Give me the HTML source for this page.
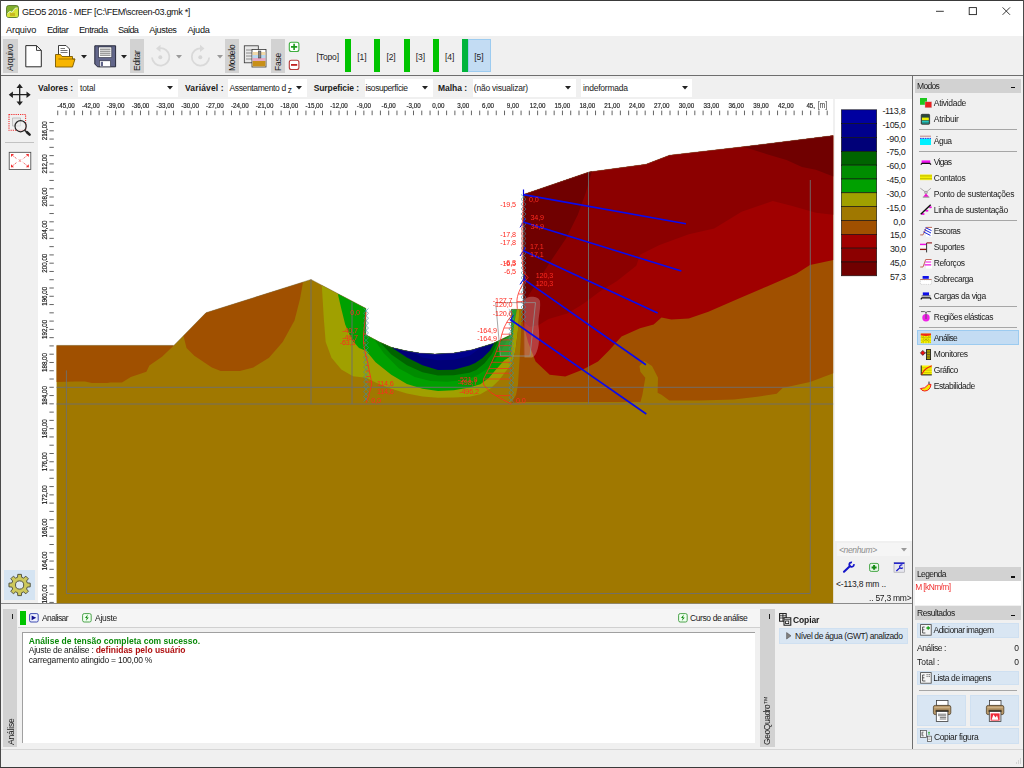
<!DOCTYPE html>
<html><head><meta charset="utf-8"><title>GEO5 2016 - MEF</title>
<style>
html,body{margin:0;padding:0;}
body{width:1024px;height:768px;overflow:hidden;background:#f0f0f0;font-family:"Liberation Sans",sans-serif;font-size:8.5px;color:#1a1a1a;}
#win{position:relative;width:1024px;height:768px;overflow:hidden;background:#f0f0f0;}
.a{position:absolute;}
.t{position:absolute;white-space:pre;line-height:10px;height:10px;letter-spacing:-0.28px;}
.b{font-weight:bold;}
.vt{position:absolute;white-space:pre;transform-origin:0 0;transform:rotate(-90deg);line-height:10px;height:10px;letter-spacing:-0.28px;}
.lab{position:absolute;background:#d2d2d2;}
.hdr{position:absolute;background:#d2d2d2;height:14px;}
.btn{position:absolute;background:#d9e6f3;box-sizing:border-box;border:0.6px solid #cfe0f1;}
.sep{position:absolute;height:1px;background:#a6a6a6;}
svg{position:absolute;overflow:visible;}

</style></head>
<body>
<div id="win">
<div class="a" style="left:0px;top:0px;width:1024px;height:36px;background:#ffffff;"></div>
<svg style="left:6px;top:5px" width="13" height="13" viewBox="0 0 13 13"><rect x="0.5" y="0.5" width="12" height="12" rx="2.2" fill="#7fae2c" stroke="#4d6b1e" stroke-width="0.8"/><path d="M1,9 L4,6.5 L6,7.5 L9,3.5 L12,3 L12,11 Q12,12 11,12 L2,12 Q1,12 1,11 Z" fill="#d8e43a"/><path d="M1.5,8.5 L4,6.3 L6,7.3 L9,3.3 L11.5,2.8" fill="none" stroke="#fff" stroke-width="0.8"/><rect x="4" y="8" width="5" height="3" fill="#c8b820"/></svg>
<div class="t " style="left:22px;top:6.5px;font-size:9.1px;color:#111;letter-spacing:-0.360px">GEO5 2016 - MEF [C:\FEM\screen-03.gmk *]</div>
<svg style="left:930px;top:4px" width="90" height="16" viewBox="930 4 90 16"><path d="M936,11.3 H943.8" stroke="#222" stroke-width="0.9"/><rect x="969.2" y="7.6" width="7.2" height="7.0" fill="none" stroke="#222" stroke-width="0.9"/><path d="M1002.6,7.4 L1010,14.8 M1010,7.4 L1002.6,14.8" stroke="#222" stroke-width="0.9"/></svg>
<div class="t " style="left:6px;top:24.5px;font-size:9.2px;color:#111;letter-spacing:-0.149px">Arquivo</div>
<div class="t " style="left:46.9px;top:24.5px;font-size:9.2px;color:#111;letter-spacing:-0.426px">Editar</div>
<div class="t " style="left:79px;top:24.5px;font-size:9.2px;color:#111;letter-spacing:-0.520px">Entrada</div>
<div class="t " style="left:118.1px;top:24.5px;font-size:9.2px;color:#111;letter-spacing:-0.785px">Saída</div>
<div class="t " style="left:149.2px;top:24.5px;font-size:9.2px;color:#111;letter-spacing:-0.395px">Ajustes</div>
<div class="t " style="left:187.4px;top:24.5px;font-size:9.2px;color:#111;letter-spacing:-0.257px">Ajuda</div>
<div class="a" style="left:0px;top:36px;width:1024px;height:39px;background:#f0f0f0;"></div>
<div class="a" style="left:0px;top:75px;width:1024px;height:1px;background:#6e6e6e;"></div>
<div class="lab" style="left:3px;top:39px;width:14.5px;height:33.5px"></div>
<div class="vt" style="left:5.2px;top:70.5px;font-size:8.5px;letter-spacing:-0.25px;">Arquivo</div>
<div class="lab" style="left:130px;top:39px;width:13.8px;height:33.5px"></div>
<div class="vt" style="left:131.9px;top:70.5px;font-size:8.5px;letter-spacing:-0.25px;">Editar</div>
<div class="lab" style="left:225px;top:39px;width:13.8px;height:33.5px"></div>
<div class="vt" style="left:226.9px;top:71.0px;font-size:8.5px;letter-spacing:-0.25px;">Modelo</div>
<div class="lab" style="left:270.8px;top:39px;width:14.2px;height:33.5px"></div>
<div class="vt" style="left:272.9px;top:71.0px;font-size:8.5px;letter-spacing:-0.25px;">Fase</div>
<svg style="left:24px;top:44px" width="20" height="25" viewBox="24 44 20 25"><path d="M25.8,45.6 H36.5 L41.3,50.4 V66.8 H25.8 Z" fill="#fff" stroke="#2a2a2a" stroke-width="1"/><path d="M36.5,45.6 V50.4 H41.3" fill="none" stroke="#2a2a2a" stroke-width="0.9"/></svg>
<svg style="left:54px;top:44px" width="23" height="25" viewBox="54 44 23 25"><path d="M58.5,45.5 H66 L69.5,49 V58 H58.5 Z" fill="#fff" stroke="#2a2a2a" stroke-width="0.9"/><path d="M60.5,48.5 H65 M60.5,50.5 H67.5 M60.5,52.5 H67.5" stroke="#555" stroke-width="0.8"/><path d="M55.5,54.5 H60.5 L62,56.5 H72.5 V59 H75 L72.5,67 H55.5 Z" fill="#f7b500" stroke="#7a5a00" stroke-width="0.9"/><path d="M58.5,59 H75" stroke="#7a5a00" stroke-width="0.7"/></svg>
<svg style="left:81.3px;top:54.8px" width="6" height="3.5" viewBox="0 0 6 3.5"><path d="M0,0 L6,0 L3,3.5 Z" fill="#222"/></svg>
<svg style="left:93px;top:44px" width="25" height="25" viewBox="93 44 25 25"><path d="M94.8,45.8 H115.6 V66.8 H97.5 L94.8,64 Z" fill="#62668a" stroke="#26283a" stroke-width="1"/><rect x="98.6" y="47" width="13.2" height="10.5" fill="#fff" stroke="#26283a" stroke-width="0.6"/><path d="M100,49.2 H110.5 M100,51.2 H110.5 M100,53.2 H110.5 M100,55.2 H110.5" stroke="#333" stroke-width="0.7"/><rect x="99.5" y="60.8" width="11" height="6" fill="#fff" stroke="#26283a" stroke-width="0.6"/><rect x="100.8" y="61.8" width="2.2" height="4.2" fill="#62668a"/></svg>
<svg style="left:121.3px;top:54.8px" width="6" height="3.5" viewBox="0 0 6 3.5"><path d="M0,0 L6,0 L3,3.5 Z" fill="#222"/></svg>
<svg style="left:148px;top:44px" width="80" height="26" viewBox="148 44 80 26"><g fill="none" stroke="#d9d9d9" stroke-width="1.8"><path d="M159.5,48.3 A8.7,8.7 0 1 1 152,57.5"/><path d="M201,48.3 A8.7,8.7 0 1 0 209.2,57.5"/></g><path d="M160.5,44.8 L156,48.4 L160.5,52 Z" fill="#d9d9d9"/><path d="M200,44.8 L204.5,48.4 L200,52 Z" fill="#d9d9d9"/><circle cx="160.3" cy="57.3" r="2" fill="#d6d6d6"/><circle cx="200.3" cy="57.3" r="2" fill="#d6d6d6"/></svg>
<svg style="left:176.3px;top:54.8px" width="6" height="3.5" viewBox="0 0 6 3.5"><path d="M0,0 L6,0 L3,3.5 Z" fill="#9a9a9a"/></svg>
<svg style="left:216.8px;top:54.8px" width="6" height="3.5" viewBox="0 0 6 3.5"><path d="M0,0 L6,0 L3,3.5 Z" fill="#9a9a9a"/></svg>
<svg style="left:243px;top:44px" width="25" height="25" viewBox="243 44 25 25"><rect x="244.3" y="45.8" width="14" height="17" fill="#e8e8e8" stroke="#333" stroke-width="0.8"/><path d="M246,50 H256 M246,53 H256 M246,56 H256 M246,59 H256" stroke="#777" stroke-width="0.8"/><rect x="252" y="49.5" width="14" height="17.5" fill="#fff" stroke="#333" stroke-width="0.8"/><rect x="252.6" y="52" width="12.8" height="3" fill="#f0d8a8"/><rect x="252.6" y="55" width="12.8" height="3" fill="#b8d8f0"/><rect x="252.6" y="58" width="12.8" height="3" fill="#e8a8c0"/><rect x="252.6" y="61" width="12.8" height="5.4" fill="#c89018"/><rect x="258.5" y="51" width="2.4" height="7" fill="#888" stroke="#333" stroke-width="0.5"/></svg>
<svg style="left:288px;top:41px" width="13" height="31" viewBox="288 41 13 31"><rect x="289.3" y="42.3" width="9.6" height="9.2" rx="2" fill="#fff" stroke="#3fae3f" stroke-width="1.1"/><path d="M291,46.9 H297.2 M294.1,43.8 V50" stroke="#1c9a1c" stroke-width="1.6"/><rect x="289.3" y="60.3" width="9.6" height="9.2" rx="2" fill="#fff" stroke="#b43a3a" stroke-width="1.1"/><path d="M291,64.9 H297.2" stroke="#c02020" stroke-width="1.8"/></svg>
<div class="t " style="left:316.6px;top:52.0px;font-size:8.5px;color:#222;letter-spacing:-0.151px">[Topo]</div>
<div class="a" style="left:345px;top:39.3px;width:6.1px;height:33px;background:#00c400;"></div>
<div class="t " style="left:357.2px;top:52.0px;font-size:8.5px;color:#222;letter-spacing:-0.075px">[1]</div>
<div class="a" style="left:374.2px;top:39.3px;width:6.1px;height:33px;background:#00c400;"></div>
<div class="t " style="left:386.4px;top:52.0px;font-size:8.5px;color:#222;letter-spacing:-0.075px">[2]</div>
<div class="a" style="left:403.5px;top:39.3px;width:6.1px;height:33px;background:#00c400;"></div>
<div class="t " style="left:415.7px;top:52.0px;font-size:8.5px;color:#222;letter-spacing:-0.075px">[3]</div>
<div class="a" style="left:432.8px;top:39.3px;width:6.1px;height:33px;background:#00c400;"></div>
<div class="t " style="left:445.0px;top:52.0px;font-size:8.5px;color:#222;letter-spacing:-0.075px">[4]</div>
<div class="a" style="left:468px;top:39px;width:22.6px;height:33.4px;background:#c3dcf3;border:0.6px solid #9ccbf0;box-sizing:border-box"></div>
<div class="a" style="left:462px;top:39.3px;width:6.1px;height:33px;background:#00b43c;"></div>
<div class="t " style="left:474.2px;top:52.0px;font-size:8.5px;color:#222;letter-spacing:-0.075px">[5]</div>
<div class="t b" style="left:38px;top:83.0px;font-size:8.5px;letter-spacing:-0.054px">Valores :</div>
<div class="a" style="left:78px;top:79px;width:99.5px;height:18px;background:#ffffff;"></div>
<div class="t " style="left:80px;top:83.0px;font-size:8.5px;;letter-spacing:-0.191px">total</div>
<svg style="left:167.2px;top:85.7px" width="6" height="3.5" viewBox="0 0 6 3.5"><path d="M0,0 L6,0 L3,3.5 Z" fill="#222"/></svg>
<div class="t b" style="left:185px;top:83.0px;font-size:8.5px;letter-spacing:0.141px">Variável :</div>
<div class="a" style="left:228px;top:79px;width:78.6px;height:18px;background:#ffffff;"></div>
<div class="t " style="left:229.5px;top:83.0px;font-size:8.5px;;letter-spacing:-0.369px">Assentamento d <span style="position:relative;top:1.6px">z</span></div>
<svg style="left:295.5px;top:85.7px" width="6" height="3.5" viewBox="0 0 6 3.5"><path d="M0,0 L6,0 L3,3.5 Z" fill="#222"/></svg>
<div class="t b" style="left:313.7px;top:83.0px;font-size:8.5px;letter-spacing:-0.090px">Surpeficie :</div>
<div class="a" style="left:364.5px;top:79px;width:68.5px;height:18px;background:#ffffff;"></div>
<div class="t " style="left:365.6px;top:83.0px;font-size:8.5px;;letter-spacing:-0.443px">isosuperfície</div>
<svg style="left:422.3px;top:85.7px" width="6" height="3.5" viewBox="0 0 6 3.5"><path d="M0,0 L6,0 L3,3.5 Z" fill="#222"/></svg>
<div class="t b" style="left:438px;top:83.0px;font-size:8.5px;letter-spacing:-0.046px">Malha :</div>
<div class="a" style="left:472.5px;top:79px;width:103.5px;height:18px;background:#ffffff;"></div>
<div class="t " style="left:473.8px;top:83.0px;font-size:8.5px;;letter-spacing:-0.222px">(não visualizar)</div>
<svg style="left:565px;top:85.7px" width="6" height="3.5" viewBox="0 0 6 3.5"><path d="M0,0 L6,0 L3,3.5 Z" fill="#222"/></svg>
<div class="a" style="left:581px;top:79px;width:111px;height:18px;background:#ffffff;"></div>
<div class="t " style="left:583px;top:83.0px;font-size:8.5px;;letter-spacing:-0.225px">indeformada</div>
<svg style="left:681.5px;top:85.7px" width="6" height="3.5" viewBox="0 0 6 3.5"><path d="M0,0 L6,0 L3,3.5 Z" fill="#222"/></svg>
<svg style="left:7px;top:82px" width="26" height="26" viewBox="7 82 26 26"><path d="M19.7,86 V103.5 M10.8,94.7 H28.6" stroke="#222" stroke-width="1.3"/><path d="M19.7,83.8 L22.9,88 H16.5 Z M19.7,105.6 L22.9,101.4 H16.5 Z M8.7,94.7 L12.9,91.5 V97.9 Z M30.7,94.7 L26.5,91.5 V97.9 Z" fill="#222"/></svg>
<svg style="left:7px;top:112px" width="26" height="26" viewBox="7 112 26 26"><rect x="9" y="114.5" width="16.6" height="15.8" fill="none" stroke="#f03030" stroke-width="1.1" stroke-dasharray="1.2,1"/><path d="M12.5,118 H20.5 V126 H12.5 Z" fill="#e8e8e8" stroke="#b0b0b0" stroke-width="0.7"/><circle cx="20.6" cy="126.2" r="5.6" fill="#f0f0f0" fill-opacity="0.6" stroke="#222" stroke-width="1.2"/><path d="M24.8,130.4 L26.4,131.8" stroke="#222" stroke-width="1.4"/><path d="M27,132.2 L29.6,134.6" stroke="#222" stroke-width="2.6" stroke-linecap="round"/></svg>
<div class="a" style="left:5px;top:142px;width:28.5px;height:1.4px;background:#c2c2c2;"></div>
<svg style="left:8px;top:151px" width="24" height="20" viewBox="8 151 24 20"><rect x="9.2" y="152.3" width="21.6" height="17.2" fill="#fff" stroke="#444" stroke-width="0.8"/><path d="M11.5,154.5 L17,159 M28.3,154.5 L22.8,159 M11.5,166.7 L17,162.2 M28.3,166.7 L22.8,162.2" stroke="#f04040" stroke-width="0.8" stroke-dasharray="1.4,0.8"/><path d="M11,154 h3 l-3,3z M28.8,154 h-3 l3,3z M11,167.2 h3 l-3,-3z M28.8,167.2 h-3 l3,-3z" fill="#f03030"/><path d="M18.8,159.3 l1.2,1.3 l-1.2,1.3 M21,159.3 l-1.2,1.3 l1.2,1.3" stroke="#f04040" stroke-width="0.6" fill="none"/></svg>
<div class="a" style="left:3.8px;top:570px;width:31.2px;height:29.8px;background:#d5e4f2;"></div>
<svg style="left:6px;top:572px" width="28" height="28" viewBox="6 572 28 28"><path d="M27.33,582.94 L30.24,583.17 L30.24,586.83 L27.33,587.06 L26.52,589.01 L28.42,591.23 L25.83,593.82 L23.61,591.92 L21.66,592.73 L21.43,595.64 L17.77,595.64 L17.54,592.73 L15.59,591.92 L13.37,593.82 L10.78,591.23 L12.68,589.01 L11.87,587.06 L8.96,586.83 L8.96,583.17 L11.87,582.94 L12.68,580.99 L10.78,578.77 L13.37,576.18 L15.59,578.08 L17.54,577.27 L17.77,574.36 L21.43,574.36 L21.66,577.27 L23.61,578.08 L25.83,576.18 L28.42,578.77 L26.52,580.99 Z" fill="#cdc85c" stroke="#4a4a3a" stroke-width="0.9" stroke-linejoin="round"/><circle cx="19.6" cy="585" r="4.1" fill="#dfe9f4" stroke="#4a4a3a" stroke-width="0.9"/></svg>
<div class="a" style="left:38px;top:99px;width:795.4px;height:504.5px;background:#ffffff;"></div>
<svg style="left:0;top:0;will-change:transform" width="1024" height="768" viewBox="0 0 1024 768">
<path d="M57.73,110.6V115.2M66.00,110.6V115.2M74.27,110.6V115.2M82.55,110.6V115.2M90.82,110.6V115.2M99.10,110.6V115.2M107.37,110.6V115.2M115.64,110.6V115.2M123.92,110.6V115.2M132.19,110.6V115.2M140.47,110.6V115.2M148.74,110.6V115.2M157.01,110.6V115.2M165.29,110.6V115.2M173.56,110.6V115.2M181.84,110.6V115.2M190.11,110.6V115.2M198.38,110.6V115.2M206.66,110.6V115.2M214.93,110.6V115.2M223.21,110.6V115.2M231.48,110.6V115.2M239.75,110.6V115.2M248.03,110.6V115.2M256.30,110.6V115.2M264.58,110.6V115.2M272.85,110.6V115.2M281.12,110.6V115.2M289.40,110.6V115.2M297.67,110.6V115.2M305.95,110.6V115.2M314.22,110.6V115.2M322.49,110.6V115.2M330.77,110.6V115.2M339.04,110.6V115.2M347.32,110.6V115.2M355.59,110.6V115.2M363.86,110.6V115.2M372.14,110.6V115.2M380.41,110.6V115.2M388.69,110.6V115.2M396.96,110.6V115.2M405.23,110.6V115.2M413.51,110.6V115.2M421.78,110.6V115.2M430.06,110.6V115.2M438.33,110.6V115.2M446.60,110.6V115.2M454.88,110.6V115.2M463.15,110.6V115.2M471.43,110.6V115.2M479.70,110.6V115.2M487.97,110.6V115.2M496.25,110.6V115.2M504.52,110.6V115.2M512.80,110.6V115.2M521.07,110.6V115.2M529.34,110.6V115.2M537.62,110.6V115.2M545.89,110.6V115.2M554.17,110.6V115.2M562.44,110.6V115.2M570.71,110.6V115.2M578.99,110.6V115.2M587.26,110.6V115.2M595.54,110.6V115.2M603.81,110.6V115.2M612.08,110.6V115.2M620.36,110.6V115.2M628.63,110.6V115.2M636.91,110.6V115.2M645.18,110.6V115.2M653.45,110.6V115.2M661.73,110.6V115.2M670.00,110.6V115.2M678.28,110.6V115.2M686.55,110.6V115.2M694.82,110.6V115.2M703.10,110.6V115.2M711.37,110.6V115.2M719.65,110.6V115.2M727.92,110.6V115.2M736.19,110.6V115.2M744.47,110.6V115.2M752.74,110.6V115.2M761.02,110.6V115.2M769.29,110.6V115.2M777.56,110.6V115.2M785.84,110.6V115.2M794.11,110.6V115.2M802.39,110.6V115.2M810.66,110.6V115.2M818.93,110.6V115.2M827.21,110.6V115.2M49.4,602.42H53.8M49.4,594.14H53.8M49.4,585.87H53.8M49.4,577.60H53.8M49.4,569.32H53.8M49.4,561.05H53.8M49.4,552.77H53.8M49.4,544.50H53.8M49.4,536.23H53.8M49.4,527.95H53.8M49.4,519.68H53.8M49.4,511.40H53.8M49.4,503.13H53.8M49.4,494.86H53.8M49.4,486.58H53.8M49.4,478.31H53.8M49.4,470.03H53.8M49.4,461.76H53.8M49.4,453.49H53.8M49.4,445.21H53.8M49.4,436.94H53.8M49.4,428.66H53.8M49.4,420.39H53.8M49.4,412.12H53.8M49.4,403.84H53.8M49.4,395.57H53.8M49.4,387.29H53.8M49.4,379.02H53.8M49.4,370.75H53.8M49.4,362.47H53.8M49.4,354.20H53.8M49.4,345.92H53.8M49.4,337.65H53.8M49.4,329.38H53.8M49.4,321.10H53.8M49.4,312.83H53.8M49.4,304.55H53.8M49.4,296.28H53.8M49.4,288.01H53.8M49.4,279.73H53.8M49.4,271.46H53.8M49.4,263.18H53.8M49.4,254.91H53.8M49.4,246.64H53.8M49.4,238.36H53.8M49.4,230.09H53.8M49.4,221.81H53.8M49.4,213.54H53.8M49.4,205.27H53.8M49.4,196.99H53.8M49.4,188.72H53.8M49.4,180.44H53.8M49.4,172.17H53.8M49.4,163.90H53.8M49.4,155.62H53.8M49.4,147.35H53.8M49.4,139.07H53.8M49.4,130.80H53.8M49.4,122.53H53.8" stroke="#303030" stroke-width="0.75" fill="none"/>
<text transform="translate(66.0,107.7) scale(0.8,1)" font-size="7.8" text-anchor="middle" fill="#1a1a1a" stroke="#1a1a1a" stroke-width="0.18" font-family="Liberation Sans">-45,00</text>
<text transform="translate(90.8,107.7) scale(0.8,1)" font-size="7.8" text-anchor="middle" fill="#1a1a1a" stroke="#1a1a1a" stroke-width="0.18" font-family="Liberation Sans">-42,00</text>
<text transform="translate(115.6,107.7) scale(0.8,1)" font-size="7.8" text-anchor="middle" fill="#1a1a1a" stroke="#1a1a1a" stroke-width="0.18" font-family="Liberation Sans">-39,00</text>
<text transform="translate(140.5,107.7) scale(0.8,1)" font-size="7.8" text-anchor="middle" fill="#1a1a1a" stroke="#1a1a1a" stroke-width="0.18" font-family="Liberation Sans">-36,00</text>
<text transform="translate(165.3,107.7) scale(0.8,1)" font-size="7.8" text-anchor="middle" fill="#1a1a1a" stroke="#1a1a1a" stroke-width="0.18" font-family="Liberation Sans">-33,00</text>
<text transform="translate(190.1,107.7) scale(0.8,1)" font-size="7.8" text-anchor="middle" fill="#1a1a1a" stroke="#1a1a1a" stroke-width="0.18" font-family="Liberation Sans">-30,00</text>
<text transform="translate(214.9,107.7) scale(0.8,1)" font-size="7.8" text-anchor="middle" fill="#1a1a1a" stroke="#1a1a1a" stroke-width="0.18" font-family="Liberation Sans">-27,00</text>
<text transform="translate(239.8,107.7) scale(0.8,1)" font-size="7.8" text-anchor="middle" fill="#1a1a1a" stroke="#1a1a1a" stroke-width="0.18" font-family="Liberation Sans">-24,00</text>
<text transform="translate(264.6,107.7) scale(0.8,1)" font-size="7.8" text-anchor="middle" fill="#1a1a1a" stroke="#1a1a1a" stroke-width="0.18" font-family="Liberation Sans">-21,00</text>
<text transform="translate(289.4,107.7) scale(0.8,1)" font-size="7.8" text-anchor="middle" fill="#1a1a1a" stroke="#1a1a1a" stroke-width="0.18" font-family="Liberation Sans">-18,00</text>
<text transform="translate(314.2,107.7) scale(0.8,1)" font-size="7.8" text-anchor="middle" fill="#1a1a1a" stroke="#1a1a1a" stroke-width="0.18" font-family="Liberation Sans">-15,00</text>
<text transform="translate(339.0,107.7) scale(0.8,1)" font-size="7.8" text-anchor="middle" fill="#1a1a1a" stroke="#1a1a1a" stroke-width="0.18" font-family="Liberation Sans">-12,00</text>
<text transform="translate(363.9,107.7) scale(0.8,1)" font-size="7.8" text-anchor="middle" fill="#1a1a1a" stroke="#1a1a1a" stroke-width="0.18" font-family="Liberation Sans">-9,00</text>
<text transform="translate(388.7,107.7) scale(0.8,1)" font-size="7.8" text-anchor="middle" fill="#1a1a1a" stroke="#1a1a1a" stroke-width="0.18" font-family="Liberation Sans">-6,00</text>
<text transform="translate(413.5,107.7) scale(0.8,1)" font-size="7.8" text-anchor="middle" fill="#1a1a1a" stroke="#1a1a1a" stroke-width="0.18" font-family="Liberation Sans">-3,00</text>
<text transform="translate(438.3,107.7) scale(0.8,1)" font-size="7.8" text-anchor="middle" fill="#1a1a1a" stroke="#1a1a1a" stroke-width="0.18" font-family="Liberation Sans">0,00</text>
<text transform="translate(463.2,107.7) scale(0.8,1)" font-size="7.8" text-anchor="middle" fill="#1a1a1a" stroke="#1a1a1a" stroke-width="0.18" font-family="Liberation Sans">3,00</text>
<text transform="translate(488.0,107.7) scale(0.8,1)" font-size="7.8" text-anchor="middle" fill="#1a1a1a" stroke="#1a1a1a" stroke-width="0.18" font-family="Liberation Sans">6,00</text>
<text transform="translate(512.8,107.7) scale(0.8,1)" font-size="7.8" text-anchor="middle" fill="#1a1a1a" stroke="#1a1a1a" stroke-width="0.18" font-family="Liberation Sans">9,00</text>
<text transform="translate(537.6,107.7) scale(0.8,1)" font-size="7.8" text-anchor="middle" fill="#1a1a1a" stroke="#1a1a1a" stroke-width="0.18" font-family="Liberation Sans">12,00</text>
<text transform="translate(562.4,107.7) scale(0.8,1)" font-size="7.8" text-anchor="middle" fill="#1a1a1a" stroke="#1a1a1a" stroke-width="0.18" font-family="Liberation Sans">15,00</text>
<text transform="translate(587.3,107.7) scale(0.8,1)" font-size="7.8" text-anchor="middle" fill="#1a1a1a" stroke="#1a1a1a" stroke-width="0.18" font-family="Liberation Sans">18,00</text>
<text transform="translate(612.1,107.7) scale(0.8,1)" font-size="7.8" text-anchor="middle" fill="#1a1a1a" stroke="#1a1a1a" stroke-width="0.18" font-family="Liberation Sans">21,00</text>
<text transform="translate(636.9,107.7) scale(0.8,1)" font-size="7.8" text-anchor="middle" fill="#1a1a1a" stroke="#1a1a1a" stroke-width="0.18" font-family="Liberation Sans">24,00</text>
<text transform="translate(661.7,107.7) scale(0.8,1)" font-size="7.8" text-anchor="middle" fill="#1a1a1a" stroke="#1a1a1a" stroke-width="0.18" font-family="Liberation Sans">27,00</text>
<text transform="translate(686.5,107.7) scale(0.8,1)" font-size="7.8" text-anchor="middle" fill="#1a1a1a" stroke="#1a1a1a" stroke-width="0.18" font-family="Liberation Sans">30,00</text>
<text transform="translate(711.4,107.7) scale(0.8,1)" font-size="7.8" text-anchor="middle" fill="#1a1a1a" stroke="#1a1a1a" stroke-width="0.18" font-family="Liberation Sans">33,00</text>
<text transform="translate(736.2,107.7) scale(0.8,1)" font-size="7.8" text-anchor="middle" fill="#1a1a1a" stroke="#1a1a1a" stroke-width="0.18" font-family="Liberation Sans">36,00</text>
<text transform="translate(761.0,107.7) scale(0.8,1)" font-size="7.8" text-anchor="middle" fill="#1a1a1a" stroke="#1a1a1a" stroke-width="0.18" font-family="Liberation Sans">39,00</text>
<text transform="translate(785.8,107.7) scale(0.8,1)" font-size="7.8" text-anchor="middle" fill="#1a1a1a" stroke="#1a1a1a" stroke-width="0.18" font-family="Liberation Sans">42,00</text>
<text transform="translate(810.7,107.7) scale(0.8,1)" font-size="7.8" text-anchor="middle" fill="#1a1a1a" stroke="#1a1a1a" stroke-width="0.18" font-family="Liberation Sans">45,</text>
<text font-size="8.2" text-anchor="middle" transform="translate(822.5,107.9) scale(0.8,1)" fill="#2a2a2a" font-family="Liberation Sans">[m]</text>
<text transform="translate(47,594.1) rotate(-90) scale(0.8,1)" font-size="7.8" text-anchor="middle" fill="#1a1a1a" stroke="#1a1a1a" stroke-width="0.18" font-family="Liberation Sans">160,00</text>
<text transform="translate(47,561.0) rotate(-90) scale(0.8,1)" font-size="7.8" text-anchor="middle" fill="#1a1a1a" stroke="#1a1a1a" stroke-width="0.18" font-family="Liberation Sans">164,00</text>
<text transform="translate(47,528.0) rotate(-90) scale(0.8,1)" font-size="7.8" text-anchor="middle" fill="#1a1a1a" stroke="#1a1a1a" stroke-width="0.18" font-family="Liberation Sans">168,00</text>
<text transform="translate(47,494.9) rotate(-90) scale(0.8,1)" font-size="7.8" text-anchor="middle" fill="#1a1a1a" stroke="#1a1a1a" stroke-width="0.18" font-family="Liberation Sans">172,00</text>
<text transform="translate(47,461.8) rotate(-90) scale(0.8,1)" font-size="7.8" text-anchor="middle" fill="#1a1a1a" stroke="#1a1a1a" stroke-width="0.18" font-family="Liberation Sans">176,00</text>
<text transform="translate(47,428.7) rotate(-90) scale(0.8,1)" font-size="7.8" text-anchor="middle" fill="#1a1a1a" stroke="#1a1a1a" stroke-width="0.18" font-family="Liberation Sans">180,00</text>
<text transform="translate(47,395.6) rotate(-90) scale(0.8,1)" font-size="7.8" text-anchor="middle" fill="#1a1a1a" stroke="#1a1a1a" stroke-width="0.18" font-family="Liberation Sans">184,00</text>
<text transform="translate(47,362.5) rotate(-90) scale(0.8,1)" font-size="7.8" text-anchor="middle" fill="#1a1a1a" stroke="#1a1a1a" stroke-width="0.18" font-family="Liberation Sans">188,00</text>
<text transform="translate(47,329.4) rotate(-90) scale(0.8,1)" font-size="7.8" text-anchor="middle" fill="#1a1a1a" stroke="#1a1a1a" stroke-width="0.18" font-family="Liberation Sans">192,00</text>
<text transform="translate(47,296.3) rotate(-90) scale(0.8,1)" font-size="7.8" text-anchor="middle" fill="#1a1a1a" stroke="#1a1a1a" stroke-width="0.18" font-family="Liberation Sans">196,00</text>
<text transform="translate(47,263.2) rotate(-90) scale(0.8,1)" font-size="7.8" text-anchor="middle" fill="#1a1a1a" stroke="#1a1a1a" stroke-width="0.18" font-family="Liberation Sans">200,00</text>
<text transform="translate(47,230.1) rotate(-90) scale(0.8,1)" font-size="7.8" text-anchor="middle" fill="#1a1a1a" stroke="#1a1a1a" stroke-width="0.18" font-family="Liberation Sans">204,00</text>
<text transform="translate(47,197.0) rotate(-90) scale(0.8,1)" font-size="7.8" text-anchor="middle" fill="#1a1a1a" stroke="#1a1a1a" stroke-width="0.18" font-family="Liberation Sans">208,00</text>
<text transform="translate(47,163.9) rotate(-90) scale(0.8,1)" font-size="7.8" text-anchor="middle" fill="#1a1a1a" stroke="#1a1a1a" stroke-width="0.18" font-family="Liberation Sans">212,00</text>
<text transform="translate(47,130.8) rotate(-90) scale(0.8,1)" font-size="7.8" text-anchor="middle" fill="#1a1a1a" stroke="#1a1a1a" stroke-width="0.18" font-family="Liberation Sans">216,00</text>
</svg>
<div class="a" style="left:833.4px;top:99px;width:2px;height:505px;background:#f0f0f0;"></div>
<div class="a" style="left:835.3px;top:99px;width:76.6px;height:442.3px;background:#ffffff;"></div>
<div class="a" style="left:835.3px;top:541.3px;width:76.6px;height:62.5px;background:#f0f0f0;"></div>
<svg style="left:0;top:0" width="1024" height="768" viewBox="0 0 1024 768">
<rect x="841.4" y="109.80" width="35.3" height="13.83" fill="#0000a0" stroke="#101010" stroke-width="0.6"/>
<rect x="841.4" y="123.63" width="35.3" height="13.83" fill="#00008c" stroke="#101010" stroke-width="0.6"/>
<rect x="841.4" y="137.47" width="35.3" height="13.83" fill="#000078" stroke="#101010" stroke-width="0.6"/>
<rect x="841.4" y="151.30" width="35.3" height="13.83" fill="#006400" stroke="#101010" stroke-width="0.6"/>
<rect x="841.4" y="165.13" width="35.3" height="13.83" fill="#008c00" stroke="#101010" stroke-width="0.6"/>
<rect x="841.4" y="178.97" width="35.3" height="13.83" fill="#00a000" stroke="#101010" stroke-width="0.6"/>
<rect x="841.4" y="192.80" width="35.3" height="13.83" fill="#a0a000" stroke="#101010" stroke-width="0.6"/>
<rect x="841.4" y="206.63" width="35.3" height="13.83" fill="#a07800" stroke="#101010" stroke-width="0.6"/>
<rect x="841.4" y="220.47" width="35.3" height="13.83" fill="#a05000" stroke="#101010" stroke-width="0.6"/>
<rect x="841.4" y="234.30" width="35.3" height="13.83" fill="#a00000" stroke="#101010" stroke-width="0.6"/>
<rect x="841.4" y="248.13" width="35.3" height="13.83" fill="#8c0000" stroke="#101010" stroke-width="0.6"/>
<rect x="841.4" y="261.97" width="35.3" height="13.83" fill="#700000" stroke="#101010" stroke-width="0.6"/>
</svg>
<div class="t" style="right:118.60000000000002px;top:105.9px;font-size:9px;letter-spacing:-0.310px;text-align:right">-113,8</div>
<div class="t" style="right:118.60000000000002px;top:119.7px;font-size:9px;letter-spacing:-0.443px;text-align:right">-105,0</div>
<div class="t" style="right:118.60000000000002px;top:133.6px;font-size:9px;letter-spacing:-0.328px;text-align:right">-90,0</div>
<div class="t" style="right:118.60000000000002px;top:147.4px;font-size:9px;letter-spacing:-0.328px;text-align:right">-75,0</div>
<div class="t" style="right:118.60000000000002px;top:161.2px;font-size:9px;letter-spacing:-0.328px;text-align:right">-60,0</div>
<div class="t" style="right:118.60000000000002px;top:175.1px;font-size:9px;letter-spacing:-0.328px;text-align:right">-45,0</div>
<div class="t" style="right:118.60000000000002px;top:188.9px;font-size:9px;letter-spacing:-0.328px;text-align:right">-30,0</div>
<div class="t" style="right:118.60000000000002px;top:202.7px;font-size:9px;letter-spacing:-0.328px;text-align:right">-15,0</div>
<div class="t" style="right:118.60000000000002px;top:216.6px;font-size:9px;letter-spacing:-0.155px;text-align:right">0,0</div>
<div class="t" style="right:118.60000000000002px;top:230.4px;font-size:9px;letter-spacing:-0.505px;text-align:right">15,0</div>
<div class="t" style="right:118.60000000000002px;top:244.2px;font-size:9px;letter-spacing:-0.505px;text-align:right">30,0</div>
<div class="t" style="right:118.60000000000002px;top:258.1px;font-size:9px;letter-spacing:-0.505px;text-align:right">45,0</div>
<div class="t" style="right:118.60000000000002px;top:271.9px;font-size:9px;letter-spacing:-0.505px;text-align:right">57,3</div>
<div class="a" style="left:836.5px;top:543px;width:73.5px;height:13px;background:#f5f5f5;"></div>
<div class="t " style="left:839px;top:544.7px;font-style:italic;color:#8e8e8e;font-size:8.5px;letter-spacing:-0.363px">&lt;nenhum&gt;</div>
<svg style="left:900.8px;top:548.1px" width="6" height="3.5" viewBox="0 0 6 3.5"><path d="M0,0 L6,0 L3,3.5 Z" fill="#9a9a9a"/></svg>
<svg style="left:840px;top:560px" width="68" height="14" viewBox="840 560 68 14"><path d="M844,571.7 L849.8,566.2" stroke="#1414c8" stroke-width="2.1" stroke-linecap="round"/><path d="M853.87,564.2 A2.3,2.3 0 1 1 852,562.33" stroke="#1414c8" stroke-width="1.8" fill="none"/><rect x="869.6" y="563.4" width="9" height="8" rx="1.6" fill="#e8f5e8" stroke="#48a848" stroke-width="1"/><path d="M871.6,567.4 H876.6 M874.1,565 V569.8" stroke="#148a14" stroke-width="2"/><rect x="894" y="562.6" width="10.4" height="9.6" fill="#e6e6ee" stroke="#a0a0a8" stroke-width="0.6"/><path d="M894,563.2 H904.4" stroke="#1010c8" stroke-width="1.4"/><path d="M896.4,571 L900.2,567.4 M899.8,567.6 a2,2 0 0 1 2.6,-2.6 M899.8,567.6 a2,2 0 0 0 3,0" stroke="#1010c8" stroke-width="1.2" fill="none"/></svg>
<div class="t " style="left:836px;top:579.4px;font-size:8.5px;letter-spacing:-0.170px">&lt;-113,8 mm ..</div>
<div class="t" style="right:112.60000000000002px;top:593px;font-size:8.5px;letter-spacing:-0.251px">.. 57,3 mm&gt;</div>
<div class="a" style="left:912.3px;top:76px;width:1px;height:673px;background:#6e6e6e;"></div>
<div class="hdr" style="left:915px;top:78.5px;width:106px;height:14.2px"></div>
<div class="t " style="left:917px;top:80.6px;font-size:8.5px;letter-spacing:-0.703px">Modos</div>
<div class="a" style="left:1011px;top:87px;width:4.2px;height:1.4px;background:#111;"></div>
<div class="sep" style="left:918.8px;top:129.0px;width:98.4px"></div>
<div class="sep" style="left:918.8px;top:150.5px;width:98.4px"></div>
<div class="sep" style="left:918.8px;top:219.8px;width:98.4px"></div>
<div class="sep" style="left:918.8px;top:305.5px;width:98.4px"></div>
<div class="sep" style="left:918.8px;top:326.7px;width:98.4px"></div>
<svg style="left:920px;top:97.8px" width="12" height="11" viewBox="0 0 12 11"><rect x="0" y="0" width="7" height="6.8" fill="#1ec81e"/><rect x="5" y="3.8" width="6.8" height="6" fill="#e82020" stroke="#c8c8c8" stroke-width="0.4"/></svg>
<div class="t " style="left:933.8px;top:98.2px;font-size:8.5px;letter-spacing:-0.308px">Atividade</div>
<svg style="left:920px;top:113.8px" width="12" height="11" viewBox="0 0 12 11"><rect x="1.2" y="0.3" width="8.4" height="10" rx="0.8" fill="#2a4a3a" stroke="#222" stroke-width="0.7"/><rect x="2" y="3.6" width="6.8" height="2.6" fill="#f0f000"/><rect x="2" y="6.8" width="6.8" height="1" fill="#20e8e8"/><rect x="2" y="8.4" width="6.8" height="1" fill="#20c8c8"/></svg>
<div class="t " style="left:933.8px;top:114.2px;font-size:8.5px;letter-spacing:-0.260px">Atribuir</div>
<svg style="left:920px;top:135.2px" width="12" height="11" viewBox="0 0 12 11"><rect x="0" y="3.6" width="11" height="6.4" fill="#00f0ff"/><path d="M0,1.2 H11" stroke="#c07878" stroke-width="0.9"/><path d="M0,3.4 H11" stroke="#2020e0" stroke-width="0.9" stroke-dasharray="1.6,0.8"/></svg>
<div class="t " style="left:933.8px;top:135.6px;font-size:8.5px;letter-spacing:-0.517px">Água</div>
<svg style="left:920px;top:156.2px" width="12" height="11" viewBox="0 0 12 11"><rect x="1.6" y="4.4" width="8.6" height="2.7" fill="#f010f0"/><path d="M0.8,8.7 L2,7.3 H9.8 L11,8.7" stroke="#111" stroke-width="1.2" fill="none"/></svg>
<div class="t " style="left:933.8px;top:156.6px;font-size:8.5px;letter-spacing:-0.727px">Vigas</div>
<svg style="left:920px;top:172.1px" width="12" height="11" viewBox="0 0 12 11"><path d="M0,3 l1,-1 l1,1 l1,-1 l1,1 l1,-1 l1,1 l1,-1 l1,1 l1,-1 l1,1 l1,-1 l1,1 V7.6 l-1,1 l-1,-1 l-1,1 l-1,-1 l-1,1 l-1,-1 l-1,1 l-1,-1 l-1,1 l-1,-1 l-1,1 l-1,-1 Z" fill="#f4f000"/><path d="M0,3.9 H12 M0,6.7 H12" stroke="#a8a000" stroke-width="0.7"/></svg>
<div class="t " style="left:933.8px;top:172.5px;font-size:8.5px;letter-spacing:-0.303px">Contatos</div>
<svg style="left:920px;top:188.2px" width="12" height="11" viewBox="0 0 12 11"><path d="M0.3,0.2 L6,4.4 L11,0.2" stroke="#777" stroke-width="0.6" fill="none"/><circle cx="6" cy="4.6" r="1.4" fill="#c8c8c8" stroke="#777" stroke-width="0.5"/><path d="M6,5.4 L9,8.8 H3.2 Z" fill="#f010d0"/><path d="M2.8,9.2 H9.4" stroke="#555" stroke-width="0.6"/></svg>
<div class="t " style="left:933.8px;top:188.6px;font-size:8.5px;letter-spacing:-0.294px">Ponto de sustentações</div>
<svg style="left:920px;top:204.29999999999998px" width="12" height="11" viewBox="0 0 12 11"><ellipse cx="3" cy="10" rx="1.7" ry="1" fill="#f010e0"/><ellipse cx="6.8" cy="6.8" rx="1.7" ry="1" fill="#f010e0"/><ellipse cx="10.4" cy="3.2" rx="1.5" ry="1" fill="#f010e0"/><path d="M0.7,10.2 L10.7,0.7" stroke="#111" stroke-width="1.4"/></svg>
<div class="t " style="left:933.8px;top:204.7px;font-size:8.5px;letter-spacing:-0.342px">Linha de sustentação</div>
<svg style="left:920px;top:225.6px" width="12" height="11" viewBox="0 0 12 11"><rect x="6" y="2" width="6" height="8.6" fill="#fff"/><path d="M0.2,8.9 H3 L6.5,1.4 H12" stroke="#b85848" stroke-width="0.9" fill="none"/><path d="M5.5,1.6 L11.5,4.6 M4.4,3.6 L11,7 M3.4,5.8 L10.4,9.4" stroke="#1828e0" stroke-width="1"/></svg>
<div class="t " style="left:933.8px;top:226.0px;font-size:8.5px;letter-spacing:-0.634px">Escoras</div>
<svg style="left:920px;top:241.6px" width="12" height="11" viewBox="0 0 12 11"><path d="M0,2.4 H6.4" stroke="#f010e0" stroke-width="1.4"/><path d="M0,4.9 H6.4" stroke="#fff" stroke-width="1.2"/><path d="M0,7.4 H6.4" stroke="#901010" stroke-width="1.3"/><path d="M6.6,1 V10.4" stroke="#333" stroke-width="1"/><path d="M6.6,0.9 H12" stroke="#901010" stroke-width="1.1"/></svg>
<div class="t " style="left:933.8px;top:242.0px;font-size:8.5px;letter-spacing:-0.431px">Suportes</div>
<svg style="left:920px;top:257.6px" width="12" height="11" viewBox="0 0 12 11"><rect x="6" y="2.2" width="6" height="8.4" fill="#fff"/><path d="M0.2,9 H3 L5.7,1.5 H11.6" stroke="#c05848" stroke-width="0.9" fill="none"/><path d="M5.4,4 H11.2 M4.4,6.9 H11.2" stroke="#f010e0" stroke-width="1.1"/></svg>
<div class="t " style="left:933.8px;top:258.0px;font-size:8.5px;letter-spacing:-0.402px">Reforços</div>
<svg style="left:920px;top:274.0px" width="12" height="11" viewBox="0 0 12 11"><rect x="0.4" y="5.8" width="11" height="4.6" fill="#fff" stroke="#b0b0b0" stroke-width="0.5" stroke-dasharray="1,0.8"/><rect x="2.6" y="2" width="6.2" height="2.8" fill="#1010e8"/><path d="M0.2,5.5 H11.6" stroke="#b07060" stroke-width="0.9"/></svg>
<div class="t " style="left:933.8px;top:274.4px;font-size:8.5px;letter-spacing:-0.460px">Sobrecarga</div>
<svg style="left:920px;top:290.1px" width="12" height="11" viewBox="0 0 12 11"><rect x="2.8" y="2.4" width="6.2" height="3.2" fill="#1010e8"/><rect x="1.6" y="5.8" width="8.8" height="2" fill="#d0d0d0"/><path d="M0.8,9.4 L2,7.8 H10 L11.2,9.4" stroke="#111" stroke-width="1.2" fill="none"/><path d="M1.6,5.8 H10.4" stroke="#333" stroke-width="0.6"/></svg>
<div class="t " style="left:933.8px;top:290.5px;font-size:8.5px;letter-spacing:-0.367px">Cargas da viga</div>
<svg style="left:920px;top:311.40000000000003px" width="12" height="11" viewBox="0 0 12 11"><circle cx="6" cy="6.8" r="3.7" fill="#f020e8"/><path d="M1,0.6 H4.6 Q6,0.8 6,2.4 V8 M10.8,0.6 H7.4 Q6,0.8 6,2.4" stroke="#555" stroke-width="0.9" fill="none"/></svg>
<div class="t " style="left:933.8px;top:311.8px;font-size:8.5px;letter-spacing:-0.432px">Regiões elásticas</div>
<div class="a" style="left:917.2px;top:330.4px;width:101.6px;height:14.6px;background:#c3dcf3;border:0.6px solid #9ccbf0;box-sizing:border-box"></div>
<svg style="left:920px;top:332.8px" width="12" height="11" viewBox="0 0 12 11"><rect x="0.8" y="0.6" width="10.2" height="9.6" fill="#f8f400"/><path d="M0.8,0.4 H11 V2.2 Q6,3.6 0.8,2.2 Z" fill="#f02818"/><path d="M0.8,4.6 H11 M0.8,7.2 H11 M3.4,3 V10.2 M6,3 V10.2 M8.6,3 V10.2 M0.8,3 L11,10 M11,3 L0.8,10" stroke="#605800" stroke-width="0.4" stroke-dasharray="0.8,0.8"/></svg>
<div class="t " style="left:933.8px;top:333.2px;font-size:8.5px;letter-spacing:-0.646px">Análise</div>
<svg style="left:920px;top:348.6px" width="12" height="11" viewBox="0 0 12 11"><rect x="6.4" y="0.6" width="4.2" height="10" fill="#a8a000" stroke="#111" stroke-width="0.8"/><path d="M6.4,3.2 H10.6 M6.4,5.6 H10.6 M6.4,8 H10.6" stroke="#333" stroke-width="0.5"/><path d="M2.8,1.4 L5.2,3.9 L2.8,6.4 L0.4,3.9 Z" fill="#f01010" stroke="#111" stroke-width="0.6"/><path d="M5.2,3.9 H6.4" stroke="#111" stroke-width="0.8"/></svg>
<div class="t " style="left:933.8px;top:349.0px;font-size:8.5px;letter-spacing:-0.390px">Monitores</div>
<svg style="left:920px;top:364.6px" width="12" height="11" viewBox="0 0 12 11"><rect x="1.2" y="0.5" width="10.6" height="9.4" fill="#f8f400"/><path d="M1.2,2.8 H11.8 M1.2,5.2 H11.8 M1.2,7.6 H11.8" stroke="#a8a000" stroke-width="0.5"/><path d="M1.2,0.5 V9.9 H11.8" stroke="#111" stroke-width="1" fill="none"/><path d="M1.6,9.6 Q4,3.6 11.8,0.8" stroke="#f01010" stroke-width="1.1" fill="none"/></svg>
<div class="t " style="left:933.8px;top:365.0px;font-size:8.5px;letter-spacing:-0.499px">Gráfico</div>
<svg style="left:920px;top:380.6px" width="12" height="11" viewBox="0 0 12 11"><path d="M0.4,7.6 Q5,8 8.4,3.4 L11,3.4 Q10.2,9.8 4.6,10 Q1.6,9.8 0.4,7.6 Z" fill="#f8e800" stroke="#f01818" stroke-width="1"/><path d="M9,0.6 V3" stroke="#111" stroke-width="0.9"/></svg>
<div class="t " style="left:933.8px;top:381.0px;font-size:8.5px;letter-spacing:-0.437px">Estabilidade</div>
<div class="hdr" style="left:915px;top:567.2px;width:105.8px;height:13.7px"></div>
<div class="t " style="left:917px;top:569.3px;font-size:8.5px;letter-spacing:-0.615px">Legenda</div>
<div class="a" style="left:1011px;top:576.3px;width:4.2px;height:1.4px;background:#111;"></div>
<div class="a" style="left:915px;top:580.8px;width:105.8px;height:23.8px;background:#ffffff;"></div>
<div class="t " style="left:915.2px;top:581.8px;font-size:8.4px;color:#f03030;letter-spacing:-0.574px">M [kNm/m]</div>
<div class="hdr" style="left:915px;top:606.2px;width:105.8px;height:13.5px"></div>
<div class="t " style="left:917px;top:608.0px;font-size:8.5px;letter-spacing:-0.469px">Resultados</div>
<div class="a" style="left:1011px;top:615px;width:4.2px;height:1.4px;background:#111;"></div>
<div class="btn" style="left:917px;top:622.6px;width:102px;height:15.2px"></div>
<svg style="left:920px;top:624.4px" width="12" height="12" viewBox="0 0 12 12"><rect x="0.6" y="0.6" width="10.6" height="10.6" fill="#f4f4f4" stroke="#444" stroke-width="0.8"/><path d="M2.6,3 V9 H5.4 M2.6,3 H4.6 M2.6,5.8 H4.4" stroke="#333" stroke-width="0.8" fill="none"/><path d="M6.4,4 H10 M8.2,2.2 V5.8" stroke="#18a018" stroke-width="1.3"/></svg>
<div class="t " style="left:933.6px;top:625.4px;font-size:8.5px;letter-spacing:-0.508px">Adicionar imagem</div>
<div class="t " style="left:917px;top:642.5px;font-size:8.5px;letter-spacing:-0.400px">Análise :</div>
<div class="t" style="right:5.399999999999977px;top:642.5px;font-size:8.5px">0</div>
<div class="t " style="left:917px;top:657.0px;font-size:8.5px;letter-spacing:-0.046px">Total :</div>
<div class="t" style="right:5.399999999999977px;top:657px;font-size:8.5px">0</div>
<div class="btn" style="left:917px;top:670.7px;width:102px;height:14.8px"></div>
<svg style="left:920px;top:672.2px" width="12" height="12" viewBox="0 0 12 12"><rect x="0.6" y="0.6" width="10.6" height="10.6" fill="#f4f4f4" stroke="#444" stroke-width="0.8"/><path d="M2.6,3 V9 H5.4 M2.6,3 H4.6 M2.6,5.8 H4.4" stroke="#333" stroke-width="0.8" fill="none"/><path d="M6.6,2.6 H7.6 M8.6,2.6 H9.8 M6.6,4.4 H7.6 M8.6,4.4 H9.8" stroke="#444" stroke-width="0.9"/></svg>
<div class="t " style="left:933.2px;top:673.2px;font-size:8.5px;letter-spacing:-0.404px">Lista de imagens</div>
<div class="sep" style="left:918.7px;top:690px;width:98.4px"></div>
<div class="btn" style="left:917px;top:695.3px;width:48.9px;height:30.3px"></div>
<div class="btn" style="left:970.4px;top:695.3px;width:48.6px;height:30.3px"></div>
<svg style="left:930px;top:698px" width="24" height="26" viewBox="930 698 24 26"><rect x="936.6" y="700.6" width="11.4" height="5.2" fill="#fff" stroke="#3a3a3a" stroke-width="0.8"/><rect x="933.4" y="705.4" width="17.4" height="9.2" rx="1.8" fill="#b89868" stroke="#54442c" stroke-width="0.8"/><path d="M934.4,707.4 H949.8" stroke="#d0b890" stroke-width="0.8"/><rect x="935.6" y="709.8" width="13" height="2.2" fill="#4a3c28"/><rect x="936.3" y="711.6" width="11.6" height="10" fill="#fff" stroke="#3a3a3a" stroke-width="0.8"/><path d="M938,714.2 H946.2 M938,715.8 H946.2 M938,717.4 H946.2 M938,719 H946.2" stroke="#555" stroke-width="0.8"/><rect x="937.8" y="716.4" width="2" height="3.4" fill="#fff"/></svg>
<svg style="left:983.3px;top:698px" width="24" height="26" viewBox="930 698 24 26"><rect x="936.6" y="700.6" width="11.4" height="5.2" fill="#fff" stroke="#3a3a3a" stroke-width="0.8"/><rect x="933.4" y="705.4" width="17.4" height="9.2" rx="1.8" fill="#b89868" stroke="#54442c" stroke-width="0.8"/><path d="M934.4,707.4 H949.8" stroke="#d0b890" stroke-width="0.8"/><rect x="935.6" y="709.8" width="13" height="2.2" fill="#4a3c28"/><rect x="936.3" y="711.6" width="11.6" height="10" fill="#fff" stroke="#3a3a3a" stroke-width="0.8"/><rect x="937.6" y="713.4" width="9" height="7.2" fill="#f02838"/><path d="M938.6,719.8 L940.4,714.6 L942.6,717.6 L944,715.2 L945.4,719.8 Z" fill="#fff"/></svg>
<div class="btn" style="left:917px;top:728.2px;width:102px;height:15.5px"></div>
<svg style="left:920px;top:730px" width="12" height="12" viewBox="0 0 12 12"><rect x="0.5" y="0.5" width="6" height="7" fill="#f4f4f4" stroke="#444" stroke-width="0.7"/><path d="M2,2.2 V5.8 H3.8 M2,2.2 H3.6 M2,4 H3.2" stroke="#333" stroke-width="0.6" fill="none"/><rect x="7.4" y="6.2" width="4" height="5.2" fill="#fff" stroke="#444" stroke-width="0.7"/><path d="M8.2,8 H10.6 M8.2,9.6 H10.6" stroke="#666" stroke-width="0.5"/><path d="M8,2.4 h2 M8,4 h2" stroke="#18a018" stroke-width="0.8"/></svg>
<div class="t " style="left:933.9px;top:731.8px;font-size:8.5px;letter-spacing:-0.322px">Copiar figura</div>
<div class="a" style="left:0px;top:603.3px;width:912.3px;height:1px;background:#8a8a8a;"></div>
<div class="a" style="left:2.6px;top:608.7px;width:14.9px;height:138.5px;background:#d2d2d2;"></div>
<div class="a" style="left:11.7px;top:614.4px;width:1.1px;height:4.6px;background:#222;"></div>
<div class="vt" style="left:5.6px;top:745.4px;font-size:8.5px;letter-spacing:-0.2px;">Análise</div>
<div class="a" style="left:17.5px;top:608.7px;width:742px;height:18.2px;background:#f5f5f5;"></div>
<div class="a" style="left:17.5px;top:626.9px;width:742px;height:0.9px;background:#d0d0d0;"></div>
<div class="a" style="left:19.8px;top:610.6px;width:5.8px;height:14.7px;background:#00c400;"></div>
<svg style="left:28.6px;top:612.6px" width="10" height="10" viewBox="0 0 10 10"><rect x="0.6" y="0.6" width="8.6" height="8.4" rx="1.4" fill="#eef0ff" stroke="#2a3aa8" stroke-width="0.9"/><path d="M2.6,2.4 L7.2,4.8 L2.6,7.2 Z" fill="#101090"/></svg>
<div class="t " style="left:42px;top:613.2px;font-size:8.5px;letter-spacing:-0.601px">Analisar</div>
<svg style="left:82.4px;top:612.6px" width="10" height="10" viewBox="0 0 10 10"><rect x="0.6" y="0.6" width="8.6" height="8.4" rx="1.6" fill="#f0fff0" stroke="#3a9a3a" stroke-width="0.9"/><path d="M5.8,1.6 L3,5 H4.8 L3.8,8 L6.8,4.4 H5 Z" fill="#108a10"/></svg>
<div class="t " style="left:95px;top:613.2px;font-size:8.5px;letter-spacing:-0.265px">Ajuste</div>
<svg style="left:677.8px;top:612.8px" width="10" height="10" viewBox="0 0 10 10"><rect x="0.6" y="0.6" width="8.6" height="8.4" rx="1.6" fill="#f0fff0" stroke="#3a9a3a" stroke-width="0.9"/><path d="M5.8,1.6 L3,5 H4.8 L3.8,8 L6.8,4.4 H5 Z" fill="#108a10"/></svg>
<div class="t " style="left:690px;top:613.2px;font-size:8.5px;letter-spacing:-0.399px">Curso de análise</div>
<div class="a" style="left:22.4px;top:632px;width:732.8px;height:110.8px;background:#ffffff;border-left:1px solid #a0a0a0;border-top:1px solid #a0a0a0;box-sizing:border-box"></div>
<div class="t b" style="left:28.8px;top:636.0px;font-size:8.5px;color:#0a8a0a;letter-spacing:0.020px">Análise de tensão completa com sucesso.</div>
<div class="t " style="left:28.8px;top:645.4px;font-size:8.5px;letter-spacing:-0.248px">Ajuste de análise :</div>
<div class="t b" style="left:95.7px;top:645.4px;font-size:8.5px;color:#b01010;letter-spacing:-0.019px">definidas pelo usuário</div>
<div class="t " style="left:28.8px;top:654.8px;font-size:8.5px;letter-spacing:-0.212px">carregamento atingido = 100,00 %</div>
<div class="a" style="left:759.6px;top:608.7px;width:15px;height:138.5px;background:#d2d2d2;"></div>
<div class="a" style="left:769px;top:614.4px;width:1.1px;height:4.6px;background:#222;"></div>
<div class="vt" style="left:762.2px;top:745.4px;font-size:8.5px;letter-spacing:-0.45px;">GeoQuadro™</div>
<svg style="left:779px;top:613.4px" width="13" height="13" viewBox="0 0 13 13"><rect x="0.6" y="0.6" width="6.6" height="7.6" fill="#fff" stroke="#111" stroke-width="1"/><path d="M1,2.8 H7 M1,5 H7 M3.9,0.8 V8" stroke="#111" stroke-width="0.8"/><rect x="5" y="4.8" width="6.8" height="7.4" fill="#fff" stroke="#111" stroke-width="1"/><rect x="6.6" y="8" width="3.2" height="2.6" fill="#fff" stroke="#111" stroke-width="0.8"/><path d="M5.4,6.6 H11.4" stroke="#111" stroke-width="0.7"/></svg>
<div class="t b" style="left:793px;top:615.0px;font-size:8.5px;letter-spacing:-0.124px">Copiar</div>
<div class="btn" style="left:778.6px;top:628px;width:129.2px;height:15.6px"></div>
<svg style="left:786px;top:632px" width="6" height="8" viewBox="0 0 6 8"><path d="M0.6,0.6 L5,3.8 L0.6,7 Z" fill="#808080" stroke="#555" stroke-width="0.6"/></svg>
<div class="t " style="left:795px;top:630.8px;font-size:8.5px;letter-spacing:-0.398px">Nível de água (GWT) analizado</div>
<div class="a" style="left:0px;top:748.8px;width:1024px;height:0.9px;background:#d6d6d6;"></div>
<svg style="left:1012px;top:757px" width="10" height="10" viewBox="0 0 10 10"><path d="M8,2 h1 M6,4 h1 M8,4 h1 M4,6 h1 M6,6 h1 M8,6 h1" stroke="#b8b8b8" stroke-width="1"/></svg>
<div class="a" style="left:0px;top:0px;width:1024px;height:1px;background:#3a3a3a;"></div>
<div class="a" style="left:0px;top:0px;width:1.2px;height:768px;background:#4a4a4a;"></div>
<div class="a" style="left:1022.8px;top:0px;width:1.2px;height:768px;background:#4a4a4a;"></div>
<div class="a" style="left:0px;top:766.6px;width:1024px;height:1.4px;background:#3a3a3a;"></div>
<svg class="a" style="left:0;top:0;will-change:transform" width="1024" height="768" viewBox="0 0 1024 768">
<defs><clipPath id="cv"><rect x="38" y="99" width="795.4" height="504.5"/></clipPath></defs>
<g clip-path="url(#cv)">
<polygon points="56.6,603.5 56.6,345.4 173.8,345.4 206.0,312.7 240.0,302.0 311.0,279.5 366.0,308.4 366.0,334.8 379.0,341.8 391.3,347.3 405.0,350.6 419.4,353.1 435.0,354.0 453.8,353.1 472.5,349.7 492.8,343.4 511.3,334.6 511.3,309.3 523.5,309.3 523.5,194.4 589.0,172.0 646.0,164.3 669.5,155.2 745.0,146.5 833.4,135.5 833.4,603.5" fill="#a07800"/>
<polygon points="56.6,345.4 173.8,345.4 162.0,356.7 149.4,365.5 146.4,371.7 130.8,377.0 122.0,382.5 110.0,382.5 107.4,383.0 91.8,383.0 85.0,381.5 75.0,381.5 56.6,382.0" fill="#a05000"/>
<polygon points="183.5,336.0 206.0,312.7 240.0,302.0 303.0,282.2 300.0,299.0 294.5,320.5 282.7,342.0 269.0,357.7 253.4,367.4 239.8,371.0 220.7,371.0 211.9,367.4 194.3,355.7 186.5,348.0" fill="#a05000"/>
<polygon points="321.8,285.3 366.0,308.4 366.0,334.8 379.0,341.8 391.3,347.3 405.0,350.6 419.4,353.1 435.0,354.0 453.8,353.1 472.5,349.7 492.8,343.4 511.3,334.6 511.3,364.4 505.4,371.7 499.2,380.0 490.8,388.3 480.4,394.2 469.4,396.8 453.8,397.5 438.0,397.8 422.5,396.6 406.9,393.4 391.3,388.8 375.6,382.5 366.3,377.8 353.0,376.2 341.3,369.4 331.5,357.7 325.7,342.0 323.8,318.6" fill="#a0a000"/>
<polygon points="337.8,293.7 366.0,308.4 366.0,334.8 379.0,341.8 391.3,347.3 405.0,350.6 419.4,353.1 435.0,354.0 453.8,353.1 472.5,349.7 492.8,343.4 511.3,334.6 511.3,356.0 504.4,360.2 496.0,369.6 488.8,378.0 480.4,384.2 469.4,387.6 453.8,390.3 438.0,391.0 422.5,388.8 406.9,384.0 391.3,374.7 375.6,362.2 366.3,351.0 359.0,348.0 352.0,340.0 345.2,324.5 341.3,308.8" fill="#00a000"/>
<polygon points="374.0,339.1 379.0,341.8 391.3,347.3 405.0,350.6 419.4,353.1 435.0,354.0 453.8,353.1 472.5,349.7 492.8,343.4 509.6,335.4 501.3,350.8 495.0,360.2 487.7,368.5 478.5,374.5 470.0,378.5 463.1,380.0 447.5,381.7 430.3,381.0 414.7,377.0 399.0,368.4 383.4,352.8" fill="#008c00"/>
<polygon points="380.3,342.4 391.3,347.3 405.0,350.6 419.4,353.1 435.0,354.0 453.8,353.1 472.5,349.7 492.8,343.4 498.0,340.9 491.9,354.0 484.6,363.3 476.3,370.0 469.4,372.8 453.8,375.2 438.0,375.5 422.5,372.3 406.9,365.3 391.3,354.4" fill="#006400"/>
<polygon points="391.3,347.3 405.0,350.6 419.4,353.1 435.0,354.0 453.8,353.1 472.5,349.7 492.8,343.4 494.5,342.6 489.8,350.8 482.5,358.0 475.2,363.0 469.4,365.6 453.8,369.7 438.0,370.0 422.5,365.3 406.9,357.5" fill="#000078"/>
<polygon points="411.5,351.7 419.4,353.1 435.0,354.0 453.8,353.1 472.5,349.7 481.9,346.8 469.4,356.0 453.8,359.8 438.0,360.3 422.5,357.5" fill="#00008c"/>
<polygon points="511.3,309.3 523.5,309.3 523.5,194.4 589.0,172.0 646.0,164.3 669.5,155.2 745.0,146.5 833.4,135.5 833.4,373.3 810.0,382.0 782.6,388.0 776.7,393.8 757.2,396.7 733.8,399.6 698.6,400.6 669.3,400.6 661.5,394.8 657.6,392.8 658.0,377.7 652.0,366.0 644.3,361.0 639.4,366.0 640.4,371.8 645.3,377.7 642.3,395.2 640.4,402.0 519.3,402.0 511.3,403.0" fill="#a05000"/>
<polygon points="523.5,309.3 523.5,194.4 589.0,172.0 646.0,164.3 669.5,155.2 745.0,146.5 833.4,135.5 833.4,260.0 810.0,264.9 796.3,273.7 767.0,286.4 737.7,299.0 708.4,311.8 688.8,318.6 671.3,319.6 661.5,317.6 653.7,324.5 640.0,328.2 621.5,336.5 609.0,350.6 598.0,361.5 582.5,369.8 565.3,376.6 549.7,374.8 535.6,361.5 528.0,342.0 523.5,325.0" fill="#a00000"/>
<polygon points="523.5,303.0 523.5,194.4 589.0,172.0 646.0,164.3 669.5,155.2 745.0,146.5 833.4,135.5 833.4,214.7 815.8,212.8 792.3,206.0 772.8,201.0 741.6,211.8 714.2,228.4 688.8,234.3 659.5,245.0 640.0,254.8 636.3,265.7 616.7,281.3 599.4,291.7 583.8,303.4 568.0,313.2 548.6,319.0 538.8,325.0 530.0,327.0 523.5,322.0" fill="#8c0000"/>
<polygon points="523.5,194.4 589.0,172.0 592.0,171.0 585.5,193.4 577.7,215.0 566.0,238.4 550.3,261.8 536.6,283.3 523.5,302.8" fill="#700000"/>
<polygon points="743.5,146.7 833.4,135.5 833.4,176.6 815.8,169.8 802.0,166.9 786.5,160.0 767.0,154.2" fill="#700000"/>
<polygon points="511.3,309.3 517.0,309.3 514.0,325.0 512.3,340.0 511.3,350.0" fill="#20a028"/>
<polygon points="517.0,309.3 519.5,309.3 518.0,330.0 515.5,350.0 513.0,360.0 511.3,366.0 511.3,350.0 512.3,340.0 514.0,325.0" fill="#a0a000"/>
<polygon points="519.5,309.3 521.5,309.3 521.0,335.0 519.5,360.0 518.0,385.0 516.0,395.0 511.3,403.0 511.3,366.0 513.0,360.0 515.5,350.0 518.0,330.0" fill="#a07800"/>
<path d="M524,300 C526,296 538,295 540,301 C541,312 537,318 539,330 C540,345 537,356 532,357.5 L524.5,357.5 Z" fill="#ffffff" fill-opacity="0.24"/>
<polygon points="523.5,329.0 535.0,329.0 530.0,356.0 523.5,356.0" fill="#c04040" fill-opacity="0.25"/>
<polygon points="495.7,302.6 535.5,302.6 530.0,356.0 500.4,356.0" fill="none" stroke="#909090" stroke-width="0.8"/>
<polygon points="500.0,342.0 511.3,334.6 511.3,356.0 500.4,356.0" fill="#a0a0a0" fill-opacity="0.3"/>
<line x1="56.6" y1="387.3" x2="833.4" y2="387.3" stroke="#6e6e6e" stroke-width="0.9"/>
<line x1="56.6" y1="404" x2="833.4" y2="404" stroke="#6e6e6e" stroke-width="0.9"/>
<line x1="66.4" y1="370.4" x2="66.4" y2="593.5" stroke="#6e6e6e" stroke-width="0.9"/>
<line x1="66.4" y1="593.5" x2="810.3" y2="593.5" stroke="#6e6e6e" stroke-width="0.9"/>
<line x1="810.3" y1="180" x2="810.3" y2="593.5" stroke="#6e6e6e" stroke-width="0.9"/>
<line x1="311" y1="279.5" x2="311" y2="404" stroke="#6e6e6e" stroke-width="0.9"/>
<line x1="352" y1="302" x2="352" y2="404" stroke="#6e6e6e" stroke-width="0.9"/>
<line x1="588.5" y1="172" x2="588.5" y2="404" stroke="#6e6e6e" stroke-width="0.9"/>
<polyline points="56.6,345.4 173.8,345.4 206.0,312.7 240.0,302.0 311.0,279.5 366.0,308.4 366.0,334.8 379.0,341.8 391.3,347.3 405.0,350.6 419.4,353.1 435.0,354.0 453.8,353.1 472.5,349.7 492.8,343.4 511.3,334.6 511.3,309.3 523.5,309.3 523.5,194.4 589.0,172.0 646.0,164.3 669.5,155.2 745.0,146.5 833.4,135.5" fill="none" stroke="#7a6a50" stroke-width="0.6" stroke-opacity="0.7"/>
<polyline points="368.5,308.4 363.5,313.3 368.5,318.2 363.5,323.1 368.5,328.0 363.5,332.9 368.5,337.8 363.5,342.7 368.5,347.6 363.5,352.5 368.5,357.4 363.5,362.3 368.5,367.2 363.5,372.1 368.5,377.0 363.5,381.9 368.5,386.8 363.5,391.7 368.5,396.6 363.5,401.5" fill="none" stroke="#3a8ca6" stroke-width="0.65"/>
<polyline points="363.5,308.4 368.5,313.3 363.5,318.2 368.5,323.1 363.5,328.0 368.5,332.9 363.5,337.8 368.5,342.7 363.5,347.6 368.5,352.5 363.5,357.4 368.5,362.3 363.5,367.2 368.5,372.1 363.5,377.0 368.5,381.9 363.5,386.8 368.5,391.7 363.5,396.6 368.5,401.5" fill="none" stroke="#3a8ca6" stroke-width="0.65"/>
<polyline points="513.8,309.3 508.8,314.2 513.8,319.1 508.8,324.0 513.8,328.9 508.8,333.8 513.8,338.7 508.8,343.6 513.8,348.5 508.8,353.4 513.8,358.3 508.8,363.2 513.8,368.1 508.8,373.0 513.8,377.9 508.8,382.8 513.8,387.7 508.8,392.6 513.8,397.5 508.8,402.4" fill="none" stroke="#3a8ca6" stroke-width="0.65"/>
<polyline points="508.8,309.3 513.8,314.2 508.8,319.1 513.8,324.0 508.8,328.9 513.8,333.8 508.8,338.7 513.8,343.6 508.8,348.5 513.8,353.4 508.8,358.3 513.8,363.2 508.8,368.1 513.8,373.0 508.8,377.9 513.8,382.8 508.8,387.7 513.8,392.6 508.8,397.5 513.8,402.4" fill="none" stroke="#3a8ca6" stroke-width="0.65"/>
<polyline points="526.0,194.4 521.0,199.3 526.0,204.2 521.0,209.1 526.0,214.0 521.0,218.9 526.0,223.8 521.0,228.7 526.0,233.6 521.0,238.5 526.0,243.4 521.0,248.3 526.0,253.2 521.0,258.1 526.0,263.0 521.0,267.9 526.0,272.8 521.0,277.7 526.0,282.6 521.0,287.5 526.0,292.4 521.0,297.3 526.0,302.2 521.0,307.1 526.0,312.0 521.0,316.9 526.0,321.8" fill="none" stroke="#3a8ca6" stroke-width="0.65"/>
<polyline points="521.0,194.4 526.0,199.3 521.0,204.2 526.0,209.1 521.0,214.0 526.0,218.9 521.0,223.8 526.0,228.7 521.0,233.6 526.0,238.5 521.0,243.4 526.0,248.3 521.0,253.2 526.0,258.1 521.0,263.0 526.0,267.9 521.0,272.8 526.0,277.7 521.0,282.6 526.0,287.5 521.0,292.4 526.0,297.3 521.0,302.2 526.0,307.1 521.0,312.0 526.0,316.9 521.0,321.8" fill="none" stroke="#3a8ca6" stroke-width="0.65"/>
<line x1="523.5" y1="194.6" x2="686" y2="223.8" stroke="#0a0aee" stroke-width="1.65"/>
<line x1="524.0" y1="222.3" x2="681.4" y2="271" stroke="#0a0aee" stroke-width="1.65"/>
<line x1="524.0" y1="251" x2="657.6" y2="312.9" stroke="#0a0aee" stroke-width="1.65"/>
<line x1="524.0" y1="279.4" x2="645.9" y2="364.8" stroke="#0a0aee" stroke-width="1.65"/>
<line x1="510.3" y1="319.5" x2="646.3" y2="414" stroke="#0a0aee" stroke-width="1.65"/>
<line x1="523.5" y1="189.5" x2="523.5" y2="196" stroke="#0a0ae6" stroke-width="1.2"/>
<line x1="510.7" y1="320" x2="513.5" y2="314.8" stroke="#0a0ae6" stroke-width="1"/>
<path d="M520.0,227.3 L523.5,222.3 L525.0,218.3" fill="none" stroke="#0a0ae6" stroke-width="1"/>
<path d="M520.0,256 L523.5,251 L525.0,247" fill="none" stroke="#0a0ae6" stroke-width="1"/>
<path d="M520.0,284.4 L523.5,279.4 L525.0,275.4" fill="none" stroke="#0a0ae6" stroke-width="1"/>
<polyline points="511.3,316.0 507.5,321.0 504.1,327.5 501.6,335.0 500.2,341.5 495.0,355.0 488.8,368.5 483.5,379.0 483.3,382.5 484.0,385.2 490.8,392.5 501.3,398.8 511.3,404.0" fill="none" stroke="#ff2a20" stroke-width="0.8"/>
<line x1="506.7153846153846" y1="322.5" x2="511.3" y2="322.5" stroke="#ff2a20" stroke-width="0.7"/>
<line x1="503.93333333333334" y1="328" x2="511.3" y2="328" stroke="#ff2a20" stroke-width="0.7"/>
<line x1="501.8666666666667" y1="334.2" x2="511.3" y2="334.2" stroke="#ff2a20" stroke-width="0.7"/>
<line x1="500.5446153846154" y1="339.9" x2="511.3" y2="339.9" stroke="#ff2a20" stroke-width="0.7"/>
<line x1="498.6207407407407" y1="345.6" x2="511.3" y2="345.6" stroke="#ff2a20" stroke-width="0.7"/>
<line x1="496.38666666666666" y1="351.4" x2="511.3" y2="351.4" stroke="#ff2a20" stroke-width="0.7"/>
<line x1="494.2651851851852" y1="356.6" x2="511.3" y2="356.6" stroke="#ff2a20" stroke-width="0.7"/>
<line x1="491.6474074074074" y1="362.3" x2="511.3" y2="362.3" stroke="#ff2a20" stroke-width="0.7"/>
<line x1="488.8" y1="368.5" x2="511.3" y2="368.5" stroke="#ff2a20" stroke-width="0.7"/>
<line x1="486.42761904761903" y1="373.2" x2="511.3" y2="373.2" stroke="#ff2a20" stroke-width="0.7"/>
<line x1="483.5" y1="379" x2="511.3" y2="379" stroke="#ff2a20" stroke-width="0.7"/>
<line x1="495.9666666666667" y1="395.6" x2="511.3" y2="395.6" stroke="#ff2a20" stroke-width="0.7"/>
<path d="M523.5,283 C520.5,288 516.9,295 516.9,301.5 L517.3,308.8 M516.9,301.7 L523.5,301.7 M518.5,294 L523.5,294" fill="none" stroke="#ff2a20" stroke-width="0.8"/>
<path d="M523.5,272 L528.0,277.5 L523.5,283" fill="none" stroke="#ff2a20" stroke-width="0.8"/>
<path d="M523.5,200 L522.0,230 L522.3,262 L523.5,272" fill="none" stroke="#ff2a20" stroke-width="0.7"/>
<polyline points="366.0,356.0 368.0,364.0 369.4,371.6 371.2,380.0 371.7,384.0 369.4,393.4 366.3,402.8" fill="none" stroke="#ff2a20" stroke-width="0.8"/>
<line x1="366.0" y1="365.5" x2="368.3" y2="365.5" stroke="#ff2a20" stroke-width="0.7"/>
<line x1="366.0" y1="371" x2="369.3" y2="371" stroke="#ff2a20" stroke-width="0.7"/>
<line x1="366.0" y1="376.5" x2="370.4" y2="376.5" stroke="#ff2a20" stroke-width="0.7"/>
<line x1="366.0" y1="382" x2="371.5" y2="382" stroke="#ff2a20" stroke-width="0.7"/>
<path d="M366.0,312 L364.5,325 L363.5,334 L363.5,343 L366.0,357 M363.2,334 L366.0,334 M363.2,343 L366.0,343" fill="none" stroke="#ff2a20" stroke-width="0.8"/>
<text x="516" y="207.4" font-size="7.2" fill="#ff2a20" text-anchor="end" font-family="Liberation Sans" letter-spacing="-0.12">-19,5</text>
<text x="516" y="236.5" font-size="7.2" fill="#ff2a20" text-anchor="end" font-family="Liberation Sans" letter-spacing="-0.12">-17,8</text>
<text x="516" y="244.5" font-size="7.2" fill="#ff2a20" text-anchor="end" font-family="Liberation Sans" letter-spacing="-0.12">-17,8</text>
<text x="516" y="266.3" font-size="7.2" fill="#ff2a20" text-anchor="end" font-family="Liberation Sans" letter-spacing="-0.12">-16,5</text>
<text x="516" y="265.3" font-size="7.2" fill="#ff2a20" text-anchor="end" font-family="Liberation Sans" letter-spacing="-0.12">-6,3</text>
<text x="516" y="273.8" font-size="7.2" fill="#ff2a20" text-anchor="end" font-family="Liberation Sans" letter-spacing="-0.12">-6,5</text>
<text x="512.5" y="303" font-size="7.2" fill="#ff2a20" text-anchor="end" font-family="Liberation Sans" letter-spacing="-0.12">-127,7</text>
<text x="512.5" y="307.4" font-size="7.2" fill="#ff2a20" text-anchor="end" font-family="Liberation Sans" letter-spacing="-0.12">-120,0</text>
<text x="512.5" y="315.6" font-size="7.2" fill="#ff2a20" text-anchor="end" font-family="Liberation Sans" letter-spacing="-0.12">-120,0</text>
<text x="496.8" y="333.3" font-size="7.2" fill="#ff2a20" text-anchor="end" font-family="Liberation Sans" letter-spacing="-0.12">-164,9</text>
<text x="496.8" y="341.1" font-size="7.2" fill="#ff2a20" text-anchor="end" font-family="Liberation Sans" letter-spacing="-0.12">-164,9</text>
<text x="477.4" y="381.7" font-size="7.2" fill="#ff2a20" text-anchor="end" font-family="Liberation Sans" letter-spacing="-0.12">-521,9</text>
<text x="477.4" y="385" font-size="7.2" fill="#ff2a20" text-anchor="end" font-family="Liberation Sans" letter-spacing="-0.12">-498,7</text>
<text x="478.8" y="393.7" font-size="7.2" fill="#ff2a20" text-anchor="end" font-family="Liberation Sans" letter-spacing="-0.12">-496,2</text>
<text x="360" y="315" font-size="7.2" fill="#ff2a20" text-anchor="end" font-family="Liberation Sans" letter-spacing="-0.12">0,0</text>
<text x="358" y="332.6" font-size="7.2" fill="#ff2a20" text-anchor="end" font-family="Liberation Sans" letter-spacing="-0.12">-40,7</text>
<text x="358" y="339.8" font-size="7.2" fill="#ff2a20" text-anchor="end" font-family="Liberation Sans" letter-spacing="-0.12">-46,7</text>
<text x="355.5" y="345" font-size="7.2" fill="#ff2a20" text-anchor="end" font-family="Liberation Sans" letter-spacing="-0.12">-63,3</text>
<text x="529" y="201.8" font-size="7.2" fill="#ff2a20" text-anchor="start" font-family="Liberation Sans" letter-spacing="-0.12">0,0</text>
<text x="530.4" y="220.2" font-size="7.2" fill="#ff2a20" text-anchor="start" font-family="Liberation Sans" letter-spacing="-0.12">34,9</text>
<text x="530.4" y="228.6" font-size="7.2" fill="#ff2a20" text-anchor="start" font-family="Liberation Sans" letter-spacing="-0.12">34,9</text>
<text x="530" y="248.8" font-size="7.2" fill="#ff2a20" text-anchor="start" font-family="Liberation Sans" letter-spacing="-0.12">17,1</text>
<text x="530" y="257" font-size="7.2" fill="#ff2a20" text-anchor="start" font-family="Liberation Sans" letter-spacing="-0.12">17,1</text>
<text x="535.7" y="278.2" font-size="7.2" fill="#ff2a20" text-anchor="start" font-family="Liberation Sans" letter-spacing="-0.12">120,3</text>
<text x="535.7" y="286" font-size="7.2" fill="#ff2a20" text-anchor="start" font-family="Liberation Sans" letter-spacing="-0.12">120,3</text>
<text x="516" y="402.5" font-size="7.2" fill="#ff2a20" text-anchor="start" font-family="Liberation Sans" letter-spacing="-0.12">0,0</text>
<text x="376.9" y="386" font-size="7.2" fill="#ff2a20" text-anchor="start" font-family="Liberation Sans" letter-spacing="-0.12">114,6</text>
<text x="376.9" y="394.3" font-size="7.2" fill="#ff2a20" text-anchor="start" font-family="Liberation Sans" letter-spacing="-0.12">114,6</text>
<text x="371.3" y="402.7" font-size="7.2" fill="#ff2a20" text-anchor="start" font-family="Liberation Sans" letter-spacing="-0.12">0,0</text>
</g>
</svg>
</div>
</body></html>
